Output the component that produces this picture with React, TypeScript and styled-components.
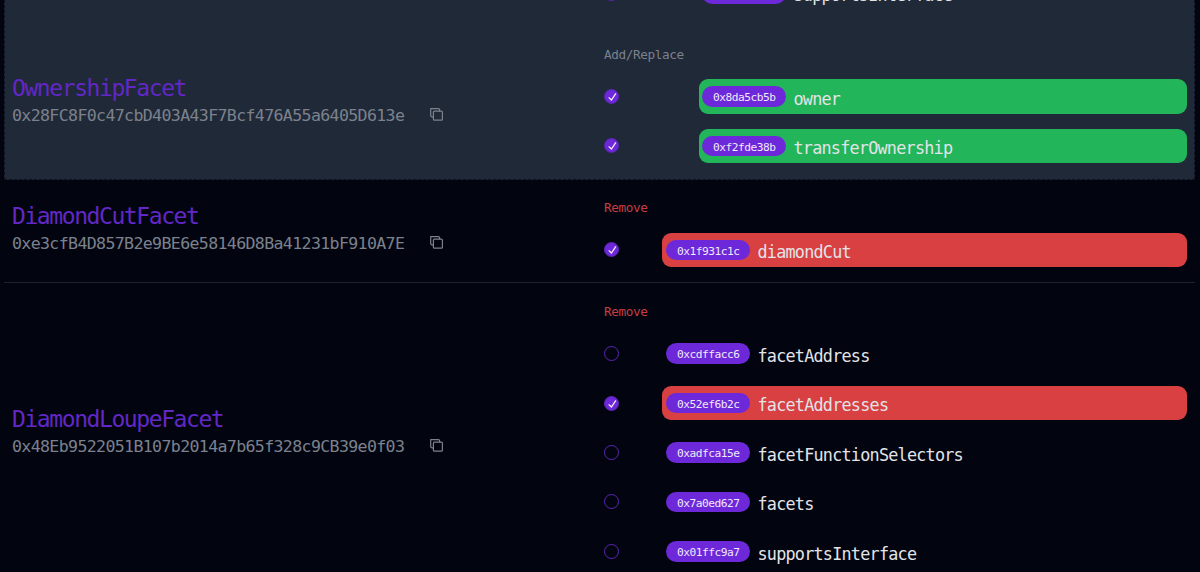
import React from 'react';
import styled, { createGlobalStyle } from 'styled-components';

const GlobalStyle = createGlobalStyle`
  *, *::before, *::after { box-sizing: border-box; }
  body {
    margin: 0;
    overflow: hidden;
    background: #020510;
    color: #e3e4e8;
    font-family: 'DejaVu Sans Mono', 'Liberation Mono', monospace;
  }
`;

const Page = styled.main`
  height: 572px;
  padding: 0 5px 0 3.5px;
  overflow: hidden;
`;

const StagedPanel = styled.section`
  display: flex;
  flex-direction: column;
  justify-content: flex-end;
  height: 179.6px;
  overflow: hidden;
  background: #1f2937;
  border: 1px dashed #0c1220;
  border-top: 0;
`;

const FacetRow = styled.section<{ $divided?: boolean; $staged?: boolean }>`
  display: flex;
  flex: none;
  align-items: center;
  padding: ${(p) => (p.$staged ? '0 7px 15.6px 7.5px' : '0 8px 15.2px 8.5px')};
  border-bottom: ${(p) => (p.$divided ? '1px solid #1f232d' : '0')};
`;

const FacetInfo = styled.div<{ $staged?: boolean }>`
  flex: none;
  width: 592px;
  padding-top: ${(p) => (p.$staged ? '13px' : '11.4px')};
`;

const FacetName = styled.h2`
  margin: 0;
  color: #6227c6;
  font-size: 23px;
  font-weight: 400;
  line-height: 29px;
  letter-spacing: -1.42px;
`;

const AddressLine = styled.div`
  display: flex;
  align-items: center;
  height: 25px;
`;

const Address = styled.span`
  width: 417px;
  color: #7c818d;
  font-size: 16.6px;
  line-height: 25px;
  letter-spacing: -0.65px;
`;

const CopyButton = styled.button`
  display: flex;
  width: 15px;
  height: 15px;
  margin-bottom: 2px;
  padding: 0;
  color: #7c818d;
  background: none;
  border: 0;
`;

const Selectors = styled.div`
  display: flex;
  flex: 1;
  flex-direction: column;
`;

const ActionLabel = styled.div<{ $tone: Tone }>`
  height: 53.2px;
  padding-top: 19.6px;
  color: ${(p) => (p.$tone === 'remove' ? '#c93d42' : '#7c818d')};
  font-size: 12.7px;
  line-height: 18px;
  letter-spacing: -0.39px;
`;

const SelectorList = styled.div`
  display: flex;
  flex-direction: column;
  gap: 15px;
`;

const SelectorRow = styled.div`
  display: flex;
  align-items: center;
  height: 34.4px;
`;

const Check = styled.span<{ $checked: boolean }>`
  display: flex;
  flex: none;
  width: 15px;
  height: 15px;
  border: 1px solid #5a25b4;
  border-radius: 50%;
  background: ${(p) => (p.$checked ? '#6d28d9' : 'transparent')};
`;

type Tone = 'add' | 'remove';

const Bar = styled.div<{ $tone: Tone; $checked: boolean }>`
  display: flex;
  flex: 1;
  align-items: center;
  height: 34.4px;
  margin-left: ${(p) => (p.$tone === 'add' ? '80.2px' : '43.2px')};
  padding-left: ${(p) => (p.$tone === 'add' ? '3.3px' : '4.3px')};
  border-radius: 9px;
  background: ${(p) =>
    !p.$checked ? 'transparent' : p.$tone === 'add' ? '#22b55a' : '#d84042'};
`;

const Badge = styled.span`
  flex: none;
  width: 83.5px;
  height: 20.6px;
  border-radius: 11px;
  background: #6d28d9;
  color: #f0eafa;
  font-size: 11.2px;
  line-height: 23.6px;
  letter-spacing: -0.5px;
  text-align: center;
`;

const FunctionName = styled.span`
  padding: 4.4px 0 0 7.5px;
  font-size: 16.8px;
  line-height: 22px;
  letter-spacing: -0.765px;
`;

const CopyIcon = () => (
  <svg width="15" height="15" viewBox="0 0 15 15" fill="none" stroke="currentColor" strokeWidth="1.2" strokeLinejoin="round" strokeLinecap="round">
    <path d="M4.2 9.8H3a1.3 1.3 0 0 1-1.3-1.3V1.6h7.6A1.3 1.3 0 0 1 10.6 2.9V4" />
    <rect x="4.4" y="4.2" width="9" height="9" rx="1" />
  </svg>
);

const CheckIcon = () => (
  <svg width="13" height="13" viewBox="0 0 13 13" fill="none" stroke="#f4effc" strokeWidth="1.3">
    <path d="M3.7 7.4l2.7 2.6 4.5-6.7" />
  </svg>
);

interface Selector {
  hash: string;
  name: string;
  checked: boolean;
}

const SelectorItems = ({ items, tone }: { items: Selector[]; tone: Tone }) => (
  <SelectorList>
    {items.map((s) => (
      <SelectorRow key={s.hash}>
        <Check role="checkbox" aria-checked={s.checked} aria-label={s.name} $checked={s.checked}>
          {s.checked && <CheckIcon />}
        </Check>
        <Bar $tone={tone} $checked={s.checked}>
          <Badge>{s.hash}</Badge>
          <FunctionName>{s.name}</FunctionName>
        </Bar>
      </SelectorRow>
    ))}
  </SelectorList>
);

interface FacetProps {
  name: string;
  address: string;
  tone: Tone;
  items: Selector[];
  divided?: boolean;
}

const Facet = ({ name, address, tone, items, divided }: FacetProps) => (
  <FacetRow $divided={divided} $staged={tone === 'add'}>
    <FacetInfo $staged={tone === 'add'}>
      <FacetName>{name}</FacetName>
      <AddressLine>
        <Address>{address}</Address>
        <CopyButton aria-label="Copy address">
          <CopyIcon />
        </CopyButton>
      </AddressLine>
    </FacetInfo>
    <Selectors>
      <ActionLabel $tone={tone}>{tone === 'add' ? 'Add/Replace' : 'Remove'}</ActionLabel>
      <SelectorItems items={items} tone={tone} />
    </Selectors>
  </FacetRow>
);

export default function App() {
  return (
    <>
      <GlobalStyle />
      <Page>
        <StagedPanel>
          <FacetRow $staged>
            <FacetInfo />
            <Selectors>
              <SelectorItems
                tone="add"
                items={[{ hash: '0x01ffc9a7', name: 'supportsInterface', checked: false }]}
              />
            </Selectors>
          </FacetRow>
          <Facet
            name="OwnershipFacet"
            address="0x28FC8F0c47cbD403A43F7Bcf476A55a6405D613e"
            tone="add"
            items={[
              { hash: '0x8da5cb5b', name: 'owner', checked: true },
              { hash: '0xf2fde38b', name: 'transferOwnership', checked: true },
            ]}
          />
        </StagedPanel>
        <Facet
          divided
          name="DiamondCutFacet"
          address="0xe3cfB4D857B2e9BE6e58146D8Ba41231bF910A7E"
          tone="remove"
          items={[{ hash: '0x1f931c1c', name: 'diamondCut', checked: true }]}
        />
        <Facet
          name="DiamondLoupeFacet"
          address="0x48Eb9522051B107b2014a7b65f328c9CB39e0f03"
          tone="remove"
          items={[
            { hash: '0xcdffacc6', name: 'facetAddress', checked: false },
            { hash: '0x52ef6b2c', name: 'facetAddresses', checked: true },
            { hash: '0xadfca15e', name: 'facetFunctionSelectors', checked: false },
            { hash: '0x7a0ed627', name: 'facets', checked: false },
            { hash: '0x01ffc9a7', name: 'supportsInterface', checked: false },
          ]}
        />
      </Page>
    </>
  );
}
